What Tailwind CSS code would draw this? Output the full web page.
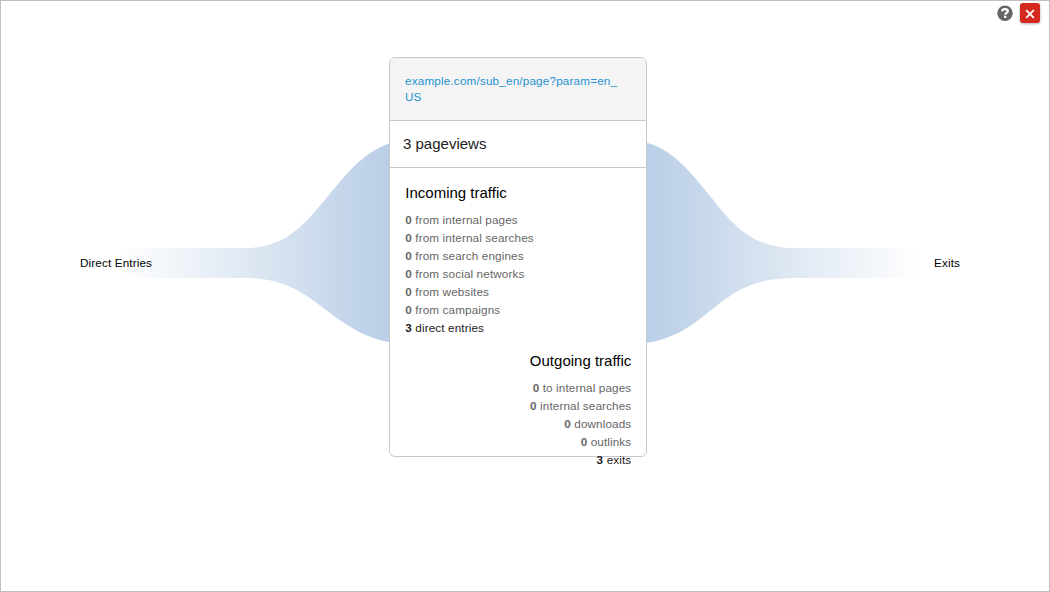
<!DOCTYPE html>
<html lang="en">
<head>
<meta charset="utf-8">
<title>Transitions</title>
<script src="https://cdn.jsdelivr.net/npm/@tailwindcss/browser@4"></script>
</head>
<body class="h-[592px] w-[1050px] overflow-hidden bg-white font-['Liberation_Sans',Arial,sans-serif]">
<div class="relative h-[592px] w-[1050px] border border-[#c0c0c0]">
  <!-- traffic flow shapes -->
  <svg class="absolute -left-px -top-px" width="1050" height="592" viewBox="0 0 1050 592">
    <defs>
      <linearGradient id="in" gradientUnits="userSpaceOnUse" x1="118" y1="0" x2="390" y2="0">
        <stop offset="0" stop-color="#fff"/><stop offset=".47" stop-color="#dfe8f3"/><stop offset="1" stop-color="#b9cee7"/>
      </linearGradient>
      <linearGradient id="out" gradientUnits="userSpaceOnUse" x1="920" y1="0" x2="646" y2="0">
        <stop offset="0" stop-color="#fff"/><stop offset=".47" stop-color="#dfe8f3"/><stop offset="1" stop-color="#b9cee7"/>
      </linearGradient>
    </defs>
    <path fill="url(#in)" d="M118 248H245C286 248 305 224 328 196C348 172 364 152 390 143.3V342.3C366 338 350 328 328 311.5C305 294 286 278 245 278H118Z"/>
    <path fill="url(#out)" d="M920 248H795C750 248 731 222 710 196C690 171 672 149 646 142.7V343C672 339 690 328 710 311C731 294 750 278 795 278H920Z"/>
  </svg>

  <div class="relative flex items-start">
    <div class="mt-[254px] ml-[79px] w-[309px] text-[11.7px] tracking-[0.14px] leading-4 text-black">Direct Entries</div>

    <main class="mt-14 h-[400px] w-[258px] shrink-0 rounded-md border border-[#c8c8c8] bg-white">
      <div class="h-[63px] rounded-t-[5px] border-b border-[#c8c8c8] bg-[#f4f4f4] px-[15px] pt-[15px] text-[11.7px] tracking-[0.18px] leading-4 text-[#1e93d1]">example.com/sub_en/page?param=en_<br>US</div>
      <div class="h-[47px] border-b border-[#c8c8c8] pt-[13px] pl-[13px] text-[15px] leading-5 text-[#212121]">3 pageviews</div>
      <section class="pr-[15px] pl-[15.3px] pt-[15px]">
        <h2 class="text-[15px] leading-5 text-black">Incoming traffic</h2>
        <ul class="mt-2 text-[11.7px] tracking-[0.13px] leading-[18px] text-[#666]">
          <li><b>0</b> from internal pages</li>
          <li><b>0</b> from internal searches</li>
          <li><b>0</b> from search engines</li>
          <li><b>0</b> from social networks</li>
          <li><b>0</b> from websites</li>
          <li><b>0</b> from campaigns</li>
          <li class="text-[#212121]"><b>3</b> direct entries</li>
        </ul>
      </section>
      <section class="pr-[14.7px] pl-[15px] pt-[14px] text-right">
        <h2 class="text-[15px] leading-5 text-black">Outgoing traffic</h2>
        <ul class="mt-2 text-[11.7px] tracking-[0.13px] leading-[18px] text-[#666]">
          <li><b>0</b> to internal pages</li>
          <li><b>0</b> internal searches</li>
          <li><b>0</b> downloads</li>
          <li><b>0</b> outlinks</li>
          <li class="text-[#212121]"><b>3</b> exits</li>
        </ul>
      </section>
    </main>

    <div class="mt-[254px] ml-[287px] text-[11.7px] tracking-[0.14px] leading-4 text-black">Exits</div>
  </div>

  <div class="absolute top-[2px] right-[9px] flex items-center gap-[7px]">
    <svg width="16" height="16" viewBox="0 0 16 16"><circle cx="8" cy="8.3" r="7.7" fill="#666"/><path d="M5.1 6.4C5.2 4.8 6.4 4.2 8 4.2C9.7 4.2 10.8 5 10.8 6.3C10.8 8 8.2 7.8 8.2 9.8" fill="none" stroke="#fff" stroke-width="2.2"/><path d="M7 10.8h2.4v2.2H7z" fill="#fff"/></svg>
    <button class="flex size-5 items-center justify-center rounded-[3px] bg-[#d4291f] pt-px shadow-[0_1px_3px_rgba(0,0,0,0.3)]" aria-label="Close">
      <svg width="10" height="10" viewBox="0 0 10 10"><path d="M1.2 1.2L8.8 8.8M8.8 1.2L1.2 8.8" stroke="#fff" stroke-width="1.9"/></svg>
    </button>
  </div>
</div>
</body>
</html>
